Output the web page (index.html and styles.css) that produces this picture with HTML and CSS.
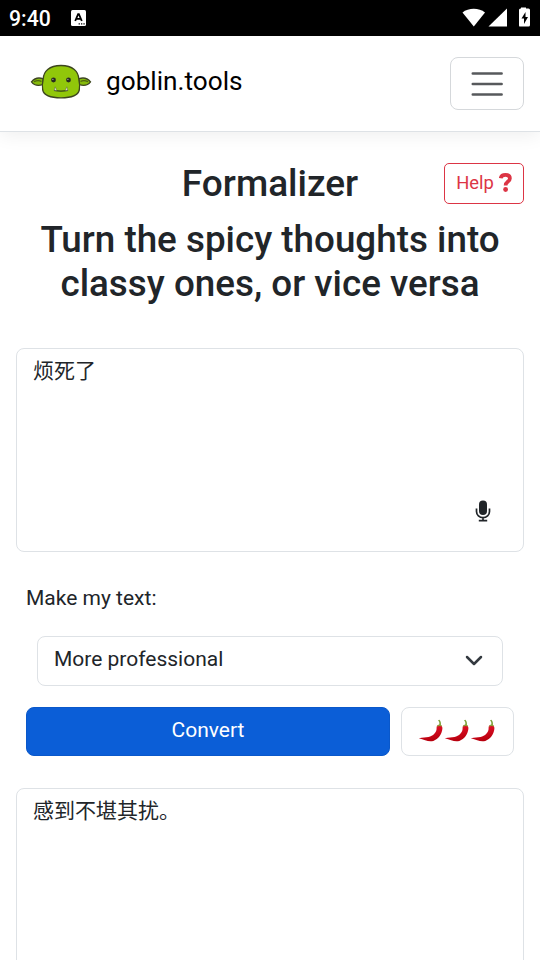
FILE: index.html
```html
<!DOCTYPE html>
<html lang="en">
<head>
<meta charset="utf-8">
<title>goblin.tools</title>
<link rel="stylesheet" href="styles.css">
</head>
<body>
<svg class="defs" width="0" height="0">
  <defs>
    <linearGradient id="red" x1="0" y1="0" x2="0.3" y2="1"><stop offset="0" stop-color="#ee1730"/><stop offset="1" stop-color="#b8000e"/></linearGradient>
    <symbol id="chili" viewBox="0 0 26 24">
      <path d="M20.800 7C21.800 4.500 21.500 2.700 20 1.300L21.500 .7C23.100 2.500 23.300 4.500 22.700 7Z" fill="#7ea33c"/>
      <path d="M18.600 9C18.400 6.800 19.700 5.900 21.300 6.100C23.600 6.200 24.600 7.500 24.400 9.800C23.800 15.300 20.500 20.300 15.300 21.900C10.500 23.400 7 20.700 .8 19.300C5 18.200 7.500 18.700 10.500 18C15 17 18.800 13.500 18.600 9Z" fill="url(#red)"/>
      <path d="M19 7.800C18.900 6.900 20 5.500 21.600 5.600C22.900 5.600 23.700 6.400 24 7.400C22 6.700 20.500 6.700 19 7.800Z" fill="#8c9d38"/>
    </symbol>
  </defs>
</svg>
<header class="status">
  <span class="clock">9:40</span>
  <svg class="app" width="15" height="16" viewBox="0 0 15 16"><rect width="15" height="16" rx="1.500" fill="#fff"/><path d="M4.200 11L7.100 4.200h.8L10.800 11M5.400 8.900h4.300" fill="none" stroke="#000" stroke-width="1.800"/><path d="M7.600 13.800h1.300m1.100 0h1.300m1.100 0h1.300" stroke="#000" stroke-width="1.300"/></svg>
  <svg class="signals" width="69" height="22" viewBox="0 0 69 22"><path d="M.5 5.500C6.500 .5 17 .5 23 5.500L11.800 19.500Z" fill="#fff"/><path d="M26.500 19.500L45 1.500v18Z" fill="#fff"/><path d="M59 1.500V.5h5v1h2.500Q68 1.500 68 3v15q0 1.500-1.500 1.500h-9Q57 19.500 57 18V3q0-1.500 1.500-1.500Z" fill="#fff"/><path d="M63.500 5L59.500 11.500h2.500V17l4-7h-2.500Z" fill="#000"/></svg>
</header>
<nav class="navbar">
  <svg class="goblin" width="62" height="36" viewBox="0 0 62 36">
    <g fill="#86bb0b" stroke="#3d461f" stroke-width="1.300">
      <path d="M13 14.700C8.500 13.200 4 14.800 1.500 17.800C4 21.200 8 22.200 13 20.500Z"/>
      <path d="M49 14.700C53.500 13.200 58 14.800 60.500 17.800C58 21.200 54 22.200 49 20.500Z"/>
      <path d="M31 1.500C43 1.500 48.500 7.500 48.800 15C49.800 19 49.800 23 49.300 26C48 31.500 42 33.800 31 33.800C20 33.800 14 31.500 12.700 26C12.200 23 12.200 19 13.200 15C13.500 7.500 19 1.500 31 1.500Z" fill="#91c70a"/>
    </g>
    <path d="M4 17.800q4-2 7.500-.3M58 17.800q-4-2-7.500-.3" fill="none" stroke="#4e6512" stroke-width="1.200"/>
    <path d="M24 26.300q7 1.600 14 0" fill="none" stroke="#35411b" stroke-width="1.200"/>
    <path d="M24.200 26.300l1-3.500 1.500 3.800ZM37.800 26.300l-1-3.500-1.500 3.800Z" fill="#f0f1df" stroke="#56613f" stroke-width=".5"/>
    <circle cx="23.500" cy="16" r="2.400" fill="#282b20"/><circle cx="38.500" cy="16" r="2.400" fill="#282b20"/>
    <circle cx="22.900" cy="15.300" r=".6" fill="#ccc"/><circle cx="37.900" cy="15.300" r=".6" fill="#ccc"/>
  </svg>
  <span class="brand">goblin.tools</span>
  <button class="toggler" aria-label="Menu"><svg width="32" height="26" viewBox="0 0 32 26"><path d="M1.800 2.500h28.800M1.800 13h28.800M1.800 23.500h28.800" stroke="#57595c" stroke-width="2.600" stroke-linecap="round"/></svg></button>
</nav>
<main>
  <div class="heading">
    <h1>Formalizer</h1>
    <button class="help">Help<svg width="13" height="19" viewBox="0 0 13 19"><path d="M1.700 5.300C2 2.800 3.900 1.900 6.500 1.900C9.200 1.900 10.900 3.200 10.900 5.400C10.900 8.700 6.600 8.200 6.600 12.500" fill="none" stroke="#dc3545" stroke-width="3.700"/><circle cx="6.600" cy="16.500" r="2.400" fill="#dc3545"/></svg></button>
  </div>
  <h2>Turn the spicy thoughts into classy ones, or vice versa</h2>
  <div class="box input">烦死了
    <svg class="mic" width="16" height="22" viewBox="0 0 16 22"><rect x="4" y=".5" width="8" height="14.500" rx="4" fill="#212529"/><path d="M1.500 8.500v3a6.500 6.200 0 0 0 13 0v-3M8 17.500v3M3.800 20.700h8.400" fill="none" stroke="#212529" stroke-width="1.700"/></svg>
  </div>
  <p class="label">Make my text:</p>
  <div class="select">More professional<svg width="18" height="12" viewBox="0 0 18 12"><path d="M2 2l7 7 7-7" fill="none" stroke="#343a40" stroke-width="2.500" stroke-linecap="round" stroke-linejoin="round"/></svg></div>
  <div class="actions">
    <button class="convert">Convert</button>
    <button class="spice" aria-label="Spiciness"><svg width="26" height="24"><use href="#chili"/></svg><svg width="26" height="24"><use href="#chili"/></svg><svg width="26" height="24"><use href="#chili"/></svg></button>
  </div>
  <div class="box output">感到不堪其扰。</div>
</main>
</body>
</html>
```
FILE: styles.css
```css
* { box-sizing: border-box; }
html { height: 100%; overflow: hidden; }
body { margin: 0; height: 960px; overflow: hidden; background: #fff; color: #212529; font: 21px/31.5px Roboto, "Noto Sans CJK SC", sans-serif; }
svg { display: block; flex: none; }
.defs { position: absolute; }
button { font: inherit; margin: 0; padding: 0; background: #fff; display: flex; align-items: center; justify-content: center; }
.status { height: 36px; background: #000; color: #fff; display: flex; align-items: flex-start; padding: 0 9px; }
.clock { width: 62px; font-size: 21.2px; font-weight: 500; line-height: 38px; }
.app { margin-top: 10px; }
.signals { margin: 7px 0 0 auto; }
.navbar { height: 96px; display: flex; align-items: flex-start; padding: 21px 16px 0 30px; border-bottom: 1px solid #dee2e6; box-shadow: 0 3px 18px rgba(0, 0, 0, .07); }
.goblin { margin-top: 7px; }
.brand { margin: 5px 0 0 14px; font-size: 26.2px; line-height: 39px; color: #000; }
.toggler { width: 74px; height: 53px; margin-left: auto; border: 1px solid #d5d8db; border-radius: 8px; }
main { padding: 29px 16px 0; }
.heading { display: grid; grid-template-columns: 80px 1fr 80px; align-items: center; height: 45px; }
h1, h2 { margin: 0; font-size: 37px; line-height: 44px; font-weight: 500; text-align: center; }
h1 { grid-column: 2; }
h2 { margin-top: 12px; font-size: 36.8px; }
.help { height: 41px; padding-bottom: 2px; gap: 5px; color: #dc3545; border: 1px solid #dc3545; border-radius: 5px; font-size: 18.4px; }
.box { border: 1px solid #dee2e6; border-radius: 8px; padding: 7px 16px; }
.input { height: 204px; margin-top: 42px; display: flex; justify-content: space-between; }
.mic { margin: 144px 16px 0 0; }
.label { margin: 31px 10px 21px; }
.select { height: 50px; margin: 0 21px; padding: 0 19px 2px 16px; border: 1px solid #dee2e6; border-radius: 8px; display: flex; align-items: center; justify-content: space-between; }
.select svg { margin-top: 3px; }
.actions { display: flex; gap: 11px; margin: 21px 10px 0; }
.convert { flex: 1; height: 49px; padding-bottom: 1px; color: #fff; background: #0b5ed7; border: 1px solid #0a58ca; border-radius: 8px; }
.spice { width: 113px; height: 49px; padding: 0 1px 1px 0; border: 1px solid #dee2e6; border-radius: 8px; }
.output { height: 204px; margin-top: 32px; }
```
